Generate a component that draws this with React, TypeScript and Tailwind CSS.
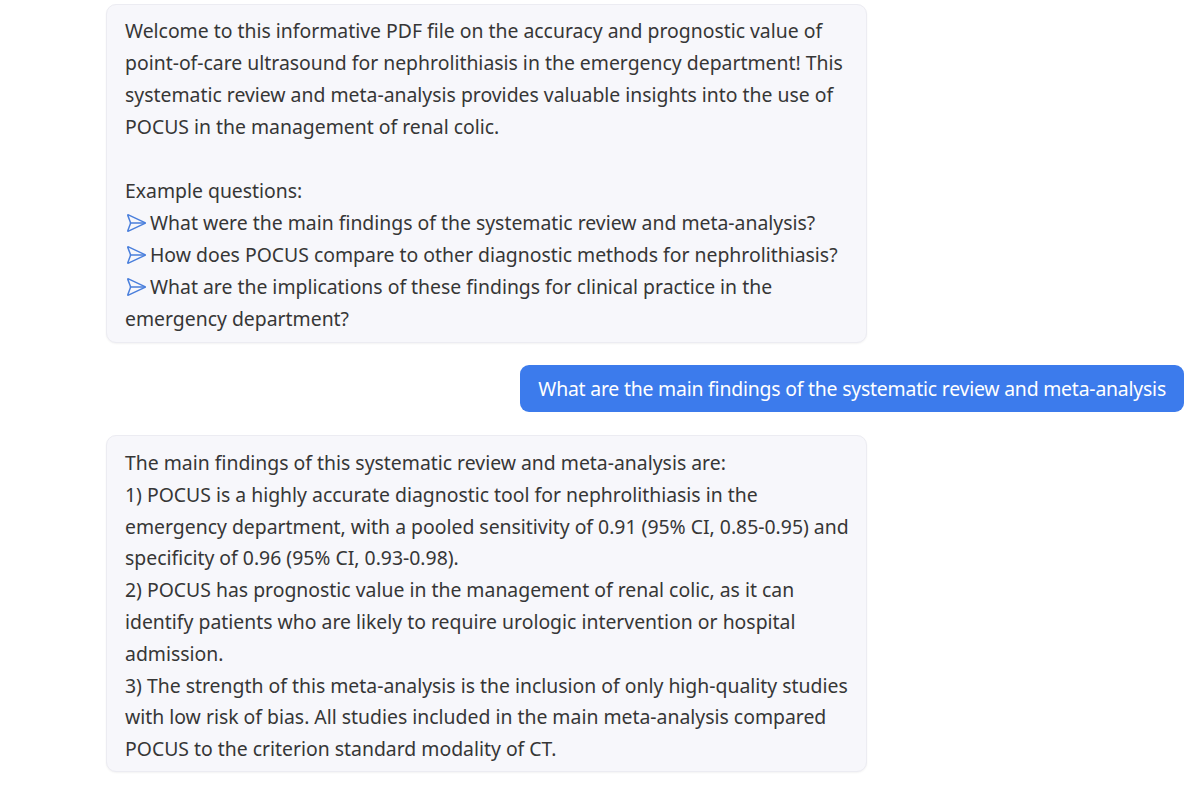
import React from "react";

const font = { fontFamily: '"Noto Sans", "Open Sans", sans-serif' };

function SendIcon() {
  return (
    <svg
      viewBox="0 0 24 24"
      className="inline-block w-[22px] h-[22px] mr-[3px] -mt-[3px] align-middle"
      fill="none"
      stroke="#4a7fdc"
      strokeWidth={1.6}
      strokeLinecap="round"
      strokeLinejoin="round"
    >
      <path d="M3.714 3.048a.498.498 0 0 0-.683.627l2.843 7.627a2 2 0 0 1 0 1.396l-2.842 7.627a.498.498 0 0 0 .682.627l18-8.5a.5.5 0 0 0 0-.904z" />
      <path d="M6 12h16" />
    </svg>
  );
}

const intro = [
  "Welcome to this informative PDF file on the accuracy and prognostic value of",
  "point-of-care ultrasound for nephrolithiasis in the emergency department! This",
  "systematic review and meta-analysis provides valuable insights into the use of",
  "POCUS in the management of renal colic.",
];

const questions: { text: string; icon: boolean }[] = [
  { text: "What were the main findings of the systematic review and meta-analysis?", icon: true },
  { text: "How does POCUS compare to other diagnostic methods for nephrolithiasis?", icon: true },
  { text: "What are the implications of these findings for clinical practice in the", icon: true },
  { text: "emergency department?", icon: false },
];

const answer = [
  "The main findings of this systematic review and meta-analysis are:",
  "1) POCUS is a highly accurate diagnostic tool for nephrolithiasis in the",
  "emergency department, with a pooled sensitivity of 0.91 (95% CI, 0.85-0.95) and",
  "specificity of 0.96 (95% CI, 0.93-0.98).",
  "2) POCUS has prognostic value in the management of renal colic, as it can",
  "identify patients who are likely to require urologic intervention or hospital",
  "admission.",
  "3) The strength of this meta-analysis is the inclusion of only high-quality studies",
  "with low risk of bias. All studies included in the main meta-analysis compared",
  "POCUS to the criterion standard modality of CT.",
];

export default function App() {
  return (
    <div className="w-[1200px] h-[796px] bg-white overflow-hidden pt-[4px]" style={font}>
      {/* bot message */}
      <div className="ml-[106px] w-[761px] rounded-[10px] bg-[#f7f7fb] border border-[#ececf2] shadow-[0_1px_2px_rgba(0,0,0,0.05)] pl-[18px] pr-4 pt-[10px] pb-[7px] text-[19.4px] leading-[32px] text-[#363636] whitespace-nowrap">
        {intro.map((l) => (
          <div key={l}>{l}</div>
        ))}
        <div className="h-[32px]" />
        <div>Example questions:</div>
        {questions.map((q) => (
          <div key={q.text}>
            {q.icon && <SendIcon />}
            {q.text}
          </div>
        ))}
      </div>

      {/* user message */}
      <div className="flex justify-end mr-[16px] mt-[22px]">
        <div className="h-[47px] flex items-center px-[18px] rounded-[9px] bg-[#3c7bec] text-white text-[19.4px] whitespace-nowrap tracking-[-0.2px]">
          What are the main findings of the systematic review and meta-analysis
        </div>
      </div>

      {/* bot answer */}
      <div className="ml-[106px] mt-[23px] w-[761px] rounded-[10px] bg-[#f7f7fb] border border-[#ececf2] shadow-[0_1px_2px_rgba(0,0,0,0.05)] pl-[18px] pr-4 pt-[11px] pb-[6px] text-[19.4px] leading-[31.8px] text-[#363636] whitespace-nowrap">
        {answer.map((l) => (
          <div key={l}>{l}</div>
        ))}
      </div>
    </div>
  );
}
